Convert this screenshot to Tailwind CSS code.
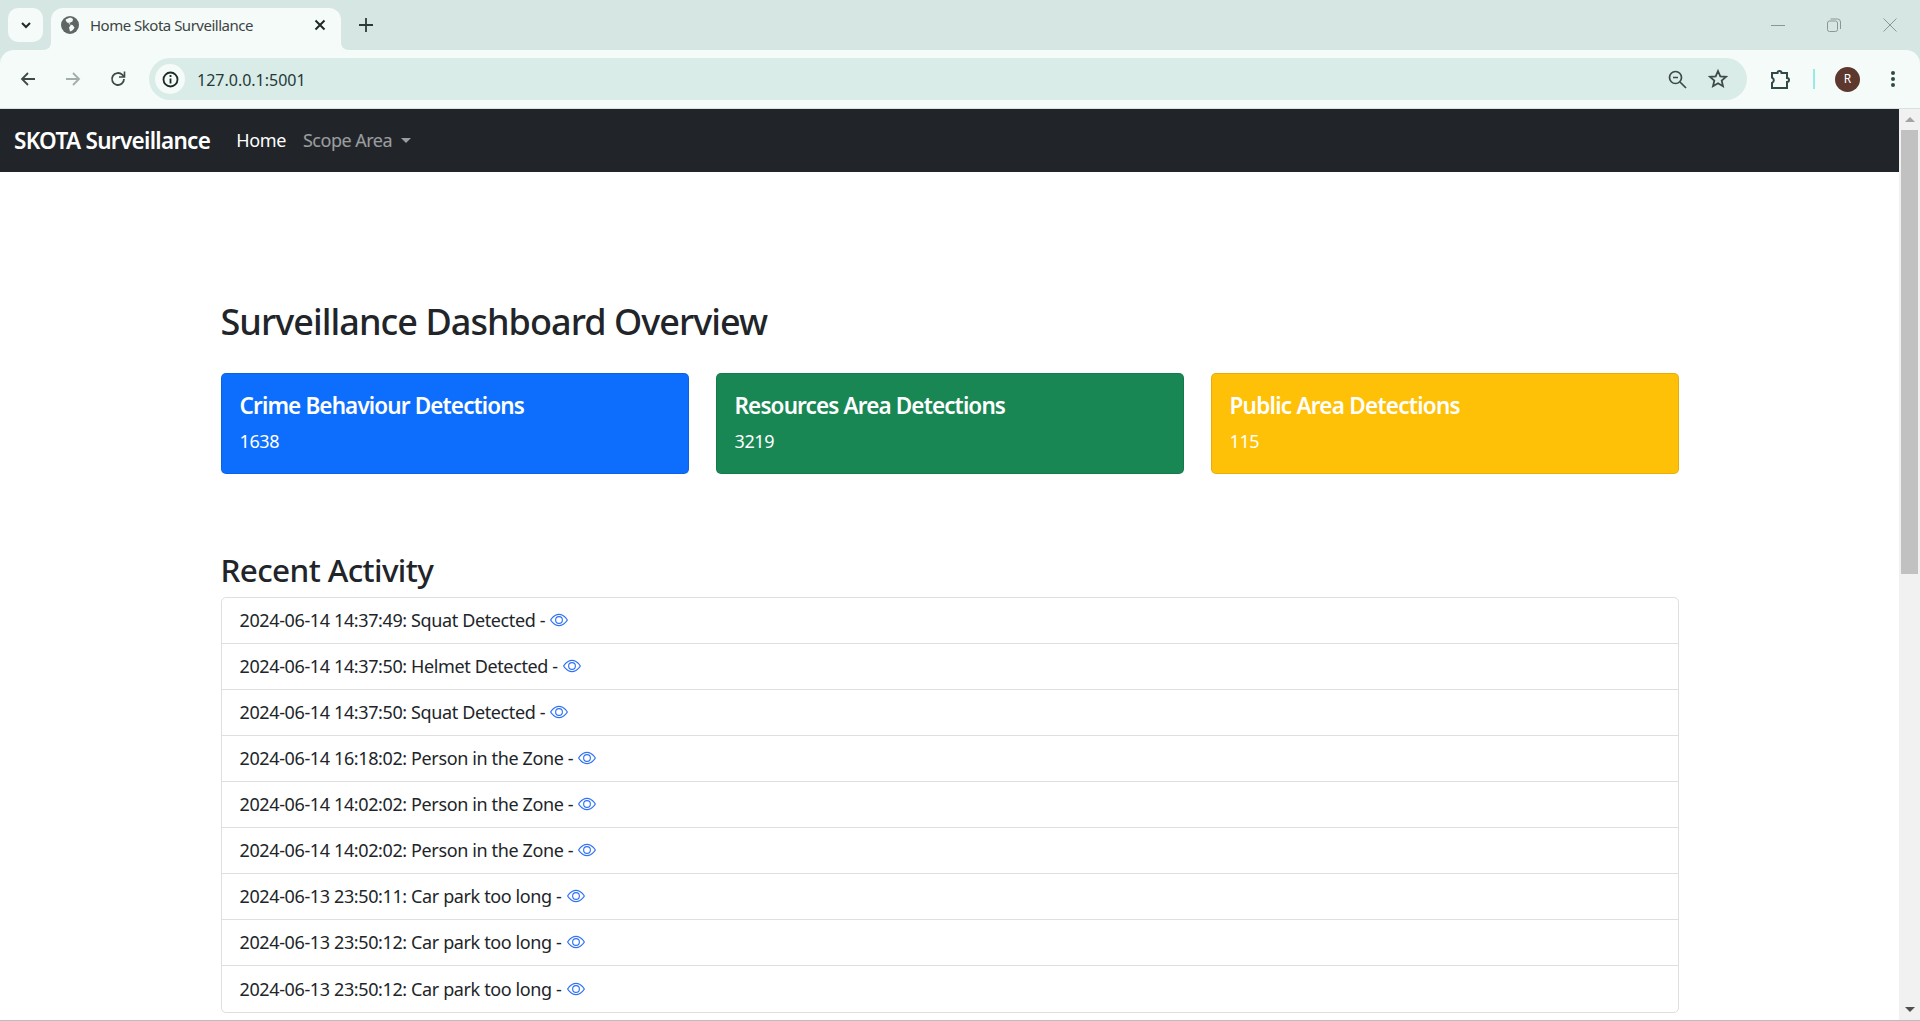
<!DOCTYPE html>
<html lang="en">
<head>
  <meta charset="UTF-8">
  <meta name="viewport" content="width=device-width, initial-scale=1.0">
  <title>Home Skota Surveillance</title>
  <script src="https://cdn.jsdelivr.net/npm/@tailwindcss/browser@4"></script>
</head>
<body class="bg-white font-['Noto_Sans',sans-serif] text-[#212529] overflow-hidden">
  <div class="flex flex-col h-screen overflow-hidden">

    <!-- Tab strip -->
    <div class="flex h-[50px] shrink-0 bg-[#d6e6e2]">
      <div class="ml-2 mt-2 w-[35px] h-[34px] rounded-[10px] bg-[#f4fbf9] flex items-center justify-center">
        <svg class="w-4 h-4" viewBox="0 0 16 16" fill="none" stroke="#1f2a28" stroke-width="2"><path d="M4 6l4 4 4-4"/></svg>
      </div>
      <div class="relative ml-2 mt-2 w-[290px] h-[42px] rounded-t-[12px] bg-[#f4fbf9] flex items-center pl-[10px] pr-[15px] pb-[8px]">
        <svg class="absolute -left-2 bottom-0 w-2 h-2" viewBox="0 0 8 8"><path d="M8 0v8H0C5 8 8 5 8 0z" fill="#f4fbf9"/></svg>
        <svg class="absolute -right-2 bottom-0 w-2 h-2" viewBox="0 0 8 8"><path d="M0 0v8h8C3 8 0 5 0 0z" fill="#f4fbf9"/></svg>
        <svg class="w-[18px] h-[18px] shrink-0" viewBox="0 0 18 18"><circle cx="9" cy="9" r="9" fill="#5f6664"/><path d="M9 1.500c-1 1-3.500.5-4.500 2.500L6 6.500l2.500.5 1 2.500-1.500 2 1 4c2-.5 4-2.500 4.500-4l-2-2.500-3-.5-1-1.500 2-.5 2-1 .5-2.500C11 2 10 1.500 9 1.500z" fill="#f4fbf9"/></svg>
        <span class="ml-[11px] text-[15px] text-[#3c4543] whitespace-nowrap tracking-[-0.5px]">Home Skota Surveillance</span>
        <svg class="ml-auto w-3 h-3" viewBox="0 0 12 12" fill="none" stroke="#1f2a28" stroke-width="2"><path d="M1.500 1.500l9 9M10.500 1.500l-9 9"/></svg>
      </div>
      <div class="ml-[18px] mt-[18px] w-[14px] h-[14px]">
        <svg class="w-[14px] h-[14px]" viewBox="0 0 14 14" fill="none" stroke="#2f3a38" stroke-width="1.8"><path d="M7 0v14M0 7h14"/></svg>
      </div>
      <!-- Window controls -->
      <div class="ml-auto flex items-start pt-[18px] pr-[23px] gap-[42px]">
        <svg class="w-[14px] h-[14px]" viewBox="0 0 14 14" fill="none" stroke="#8b9795"><path d="M0 7.500h14"/></svg>
        <svg class="w-[14px] h-[14px]" viewBox="0 0 14 14" fill="none" stroke="#8b9795"><rect x=".5" y="3" width="10" height="10.500" rx="2"/><path d="M3.500 1h7a3 3 0 0 1 3 3v7"/></svg>
        <svg class="w-[14px] h-[14px]" viewBox="0 0 14 14" fill="none" stroke="#8b9795"><path d="M.5.5l13 13M13.500.5l-13 13"/></svg>
      </div>
    </div>

    <!-- Toolbar -->
    <div class="h-[59px] shrink-0 bg-[#d6e6e2]">
      <div class="h-full rounded-t-[14px] bg-[#f4fbf9] border-b border-[#d9e2e0] flex items-center pl-[19px] pr-[25px]">
        <svg class="w-[18px] h-[18px]" viewBox="0 0 18 18" fill="none" stroke="#3d4a47" stroke-width="1.8"><path d="M16 9H3M9 3L3 9l6 6"/></svg>
        <svg class="ml-[27px] w-[18px] h-[18px]" viewBox="0 0 18 18" fill="none" stroke="#a3adaa" stroke-width="1.8"><path d="M2 9h13M9 3l6 6-6 6"/></svg>
        <svg class="ml-[27px] w-[18px] h-[18px]" viewBox="0 0 18 18" fill="none" stroke="#3d4a47" stroke-width="1.8"><path d="M15 9a6 6 0 1 1-1.800-4.300L15 6.500"/><path d="M15.500 1.500v5.500H10" stroke-width="1.6"/></svg>
        <div class="ml-[22px] flex items-center flex-1 h-[42px] rounded-full bg-[#daece8] pl-[6px] pr-[19px]">
          <div class="w-[30px] h-[30px] rounded-full bg-[#f4fbf9] flex items-center justify-center">
            <svg class="w-[17px] h-[17px]" viewBox="0 0 17 17" fill="none" stroke="#1f2a28" stroke-width="1.8"><circle cx="8.500" cy="8.500" r="7"/><path d="M8.500 7.500v5M8.500 4v2"/></svg>
          </div>
          <span class="ml-[12px] mt-[2px] text-[16px] text-[#243a38]">127.0.0.1:5001</span>
          <svg class="ml-auto w-[19px] h-[19px]" viewBox="0 0 19 19" fill="none" stroke="#3d4a47" stroke-width="1.7"><circle cx="7.500" cy="7.500" r="6"/><path d="M5 7.500h5M12 12l6 6"/></svg>
          <svg class="ml-[21px] w-[20px] h-[20px]" viewBox="0 0 20 20" fill="none" stroke="#3d4a47" stroke-width="1.8"><path d="M10 2l2.300 5.300 5.700.5-4.300 3.800 1.300 5.600L10 14.300l-5 2.900 1.300-5.600L2 7.800l5.700-.5z"/></svg>
        </div>
        <svg class="ml-[23px] w-[22px] h-[22px]" viewBox="0 0 22 22" fill="none" stroke="#2f4a47" stroke-width="2"><path d="M2 5h5.500a2 2 0 0 1 4 0H17v5a2 2 0 0 1 0 4v6H2v-5a3 3 0 0 0 0-5.500z"/></svg>
        <div class="ml-[21px] w-[2px] h-[20px] bg-[#98ebe2]"></div>
        <div class="ml-[20px] w-[25px] h-[25px] rounded-full bg-[#5d382e] flex items-center justify-center text-[12px] text-white">R</div>
        <svg class="ml-[31px] w-[4px] h-[16px]" viewBox="0 0 4 16" fill="#2f4a47"><circle cx="2" cy="2" r="2"/><circle cx="2" cy="8" r="2"/><circle cx="2" cy="14" r="2"/></svg>
      </div>
    </div>

    <!-- Page + scrollbar -->
    <div class="flex flex-1 min-h-0 border-b border-[#bdbdbd]">
      <div class="flex-1 min-w-0 overflow-hidden">
        <nav class="flex items-center h-[63px] bg-[#212529] pl-[14px]">
          <a href="#" class="text-[22.5px] font-semibold text-white whitespace-nowrap tracking-[-0.7px]">SKOTA Surveillance</a>
          <a href="#" class="ml-[26px] text-[18px] text-white tracking-[-0.35px]">Home</a>
          <a href="#" class="ml-[17px] text-[18px] text-white/55 flex items-center tracking-[-0.5px]">Scope Area
            <span class="ml-[9px] w-0 h-0 border-x-[5px] border-x-transparent border-t-[5px] border-t-white/55"></span>
          </a>
        </nav>

        <main class="w-[1458px] mx-auto pt-[128px]">
          <h2 class="text-[36px] leading-[43px] font-medium tracking-[-0.95px]">Surveillance Dashboard Overview</h2>

          <div class="grid grid-cols-3 gap-[27px] mt-[30px]">
            <div class="bg-[#0d6efd] border border-black/10 rounded-[5px] p-[18px] text-white">
              <h5 class="text-[22.5px] leading-[27px] font-semibold mb-[9px] tracking-[-0.87px]">Crime Behaviour Detections</h5>
              <p class="text-[18px] leading-[27px] tracking-[-0.36px]">1638</p>
            </div>
            <div class="bg-[#198754] border border-black/10 rounded-[5px] p-[18px] text-white">
              <h5 class="text-[22.5px] leading-[27px] font-semibold mb-[9px] tracking-[-0.87px]">Resources Area Detections</h5>
              <p class="text-[18px] leading-[27px] tracking-[-0.36px]">3219</p>
            </div>
            <div class="bg-[#ffc107] border border-black/10 rounded-[5px] p-[18px] text-white">
              <h5 class="text-[22.5px] leading-[27px] font-semibold mb-[9px] tracking-[-0.75px]">Public Area Detections</h5>
              <p class="text-[18px] leading-[27px] tracking-[-0.36px]">115</p>
            </div>
          </div>

          <h3 class="mt-[77px] mb-[8px] text-[31.5px] leading-[38px] font-medium tracking-[-0.62px]">Recent Activity</h3>

          <ul id="activity" class="border border-[#dfdfdf] rounded-[5px] text-[18px] leading-[27px] tracking-[-0.38px]"></ul>
        </main>
      </div>

      <!-- Scrollbar -->
      <div class="w-[21px] shrink-0 bg-[#f1f1f1] flex flex-col items-center">
        <div class="h-[21px] flex items-center justify-center">
          <span class="w-0 h-0 border-x-[5px] border-x-transparent border-b-[5px] border-b-[#a3a3a3]"></span>
        </div>
        <div class="w-[17px] h-[444px] bg-[#c1c1c1]"></div>
        <div class="mt-auto h-[21px] flex items-center justify-center">
          <span class="w-0 h-0 border-x-[5px] border-x-transparent border-t-[5px] border-t-[#505050]"></span>
        </div>
      </div>
    </div>
  </div>

  <script>
    // Recent activity rows
    const activities = [
      '2024-06-14 14:37:49: Squat Detected',
      '2024-06-14 14:37:50: Helmet Detected',
      '2024-06-14 14:37:50: Squat Detected',
      '2024-06-14 16:18:02: Person in the Zone',
      '2024-06-14 14:02:02: Person in the Zone',
      '2024-06-14 14:02:02: Person in the Zone',
      '2024-06-13 23:50:11: Car park too long',
      '2024-06-13 23:50:12: Car park too long',
      '2024-06-13 23:50:12: Car park too long'
    ];

    document.getElementById('activity').innerHTML = activities.map(text => `
      <li class="flex items-center h-[46px] px-[18px] border-b border-[#dfdfdf] last:border-b-0">
        <span class="whitespace-pre">${text} - </span>
        <svg class="ml-[1px] -mt-[1px] w-[18px] h-[18px]" viewBox="0 0 16 16" fill="#2f72f5">
          <path d="M16 8s-3-5.5-8-5.5S0 8 0 8s3 5.5 8 5.5S16 8 16 8zM1.173 8a13.133 13.133 0 0 1 1.66-2.043C4.12 4.668 5.88 3.5 8 3.5c2.12 0 3.879 1.168 5.168 2.457A13.133 13.133 0 0 1 14.828 8c-.058.087-.122.183-.195.288-.335.48-.83 1.12-1.465 1.755C11.879 11.332 10.119 12.5 8 12.5c-2.12 0-3.879-1.168-5.168-2.457A13.134 13.134 0 0 1 1.172 8z"/>
          <path d="M8 5.5a2.5 2.5 0 1 0 0 5 2.5 2.5 0 0 0 0-5zM4.5 8a3.5 3.5 0 1 1 7 0 3.5 3.5 0 0 1-7 0z"/>
        </svg>
      </li>
    `).join('');
  </script>
</body>
</html>
